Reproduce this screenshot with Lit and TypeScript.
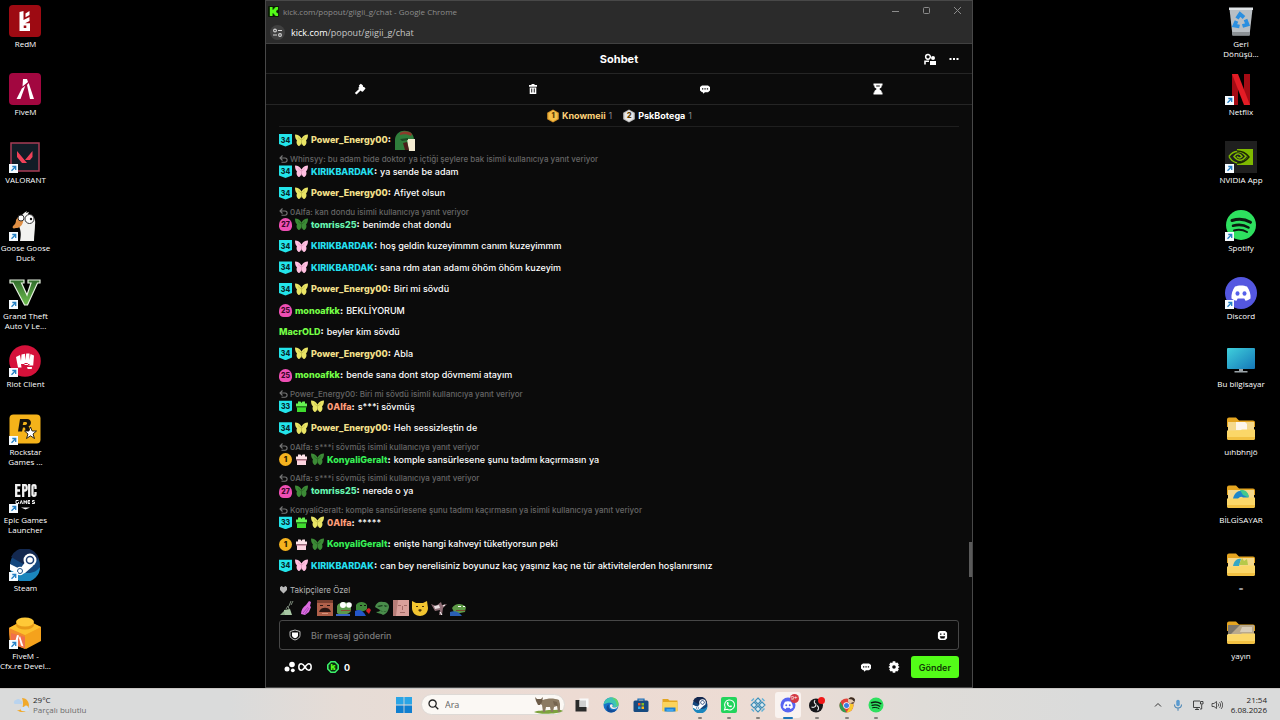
import { LitElement, html, css, svg, nothing, TemplateResult } from "lit";
import { customElement } from "lit/decorators.js";

type Art = ReturnType<typeof svg>;

const draw = (size: number, box: string, body: Art, cls = "") => html`<svg
  class=${cls}
  width=${size}
  height=${size}
  viewBox=${box}
  aria-hidden="true"
>${body}</svg>`;

/* ---------- shared logos ---------- */

const steamBody = svg`
  <circle cx="16" cy="16" r="15" fill="#14477e"/>
  <path d="M1 18a15 15 0 0 0 30 0c-5 7-14 9-30 0z" fill="#1b86bd"/>
  <path d="M2 8a15 15 0 0 1 28 2L16 16z" fill="#13284f"/>
  <path d="M1 15l10 5 6-8 7 5-8 7-5 2-10-5z" fill="#fff"/>
  <circle cx="21" cy="11" r="6.500" fill="#fff"/>
  <circle cx="21" cy="11" r="4.300" fill="#1d3f74"/>
  <circle cx="21" cy="11" r="2.800" fill="#fff"/>
  <circle cx="11" cy="22" r="4.200" fill="#fff"/>
  <circle cx="11" cy="22" r="2.500" fill="none" stroke="#1d4f86" stroke-width="1"/>`;

const discordGlyph = svg`
  <path d="M10 9.500c3-1.500 9-1.500 12 0 2.500 3.500 4 8 3.500 12-1.500 1.300-3.200 2-5 2.300l-1.200-2.200h-6.600l-1.200 2.200c-1.800-.3-3.500-1-5-2.300C6 17.500 7.500 13 10 9.500z" fill="#fff"/>
  <ellipse cx="12.500" cy="16.500" rx="2" ry="2.200" fill="#5561ea"/>
  <ellipse cx="19.500" cy="16.500" rx="2" ry="2.200" fill="#5561ea"/>`;

const spotifyBody = svg`
  <circle cx="16" cy="16" r="15" fill="#2ee05f"/>
  <g fill="none" stroke="#0b1a10" stroke-linecap="round">
    <path d="M7 11.500c6-2 13-1.500 18.500 1.800" stroke-width="3"/>
    <path d="M8 16.800c5.500-1.600 11-1 15.500 1.700" stroke-width="2.500"/>
    <path d="M9 21.500c4.500-1.200 9-.8 13 1.500" stroke-width="2"/>
  </g>`;

const folderBody = (inside: Art) => svg`
  <path d="M2 6.500a2 2 0 0 1 2-2h7l3 3h14a2 2 0 0 1 2 2V14H2z" fill="#e5a520"/>
  <path d="M3 9h26v10H3z" fill="#f5d98c"/>
  ${inside}
  <path d="M2 17.500h13l2-1h13V25a2 2 0 0 1-2 2H4a2 2 0 0 1-2-2z" fill="#fbd768"/>
  <path d="M2 24h28v1a2 2 0 0 1-2 2H4a2 2 0 0 1-2-2z" fill="#f2c142"/>`;

const shortcut = svg`
  <rect x="0" y="23" width="9" height="9" fill="#f6fbff"/>
  <path d="M2.500 29.800L6 26.300M3.300 25.500h3.400v3.400" fill="none" stroke="#2480c4" stroke-width="1.300"/>`;

/* ---------- desktop shortcuts ---------- */

interface Shortcut {
  label: string;
  art: Art;
  link?: boolean;
}

const leftIcons: Shortcut[] = [
  {
    label: "RedM",
    art: svg`<rect width="32" height="32" rx="4" fill="#9d0a12"/>
      <path d="M10.500 7l4-1v9l6-3v4l-4.500 2.200H21V26H10.500zm4.200 13.500v2.500h2.600v-2.500z" fill="#fff" fill-rule="evenodd"/>
      <path d="M16.500 8.500l4-2.500v4l-4 2.200z" fill="#fff"/>`,
  },
  {
    label: "FiveM",
    art: svg`<rect width="32" height="32" rx="4" fill="#a20740"/>
      <path d="M14 6h4l1 3-5.500 4.500zM12.800 15.500l3.500-2.800L11.500 26H7.500zM18 12l1.700-2L25 26h-4z" fill="#fff"/>`,
  },
  {
    label: "VALORANT",
    link: true,
    art: svg`<rect x="2" y="2" width="28" height="28" fill="#111c26" stroke="#a73d55" stroke-width="1.500"/>
      <path d="M8 10l10 12h-5l-5-6zM23.500 10v6l-2.500 3h-5z" fill="#ef4158"/>`,
  },
  {
    label: "Goose Goose\nDuck",
    link: true,
    art: svg`<path d="M11 32c1-6 1-8 0-12-2-5-1-12 4-16l3-2-1 2 3-1-1 2c6 1 8 6 7 11 0 5-1 10-1 16z" fill="#f2f2f0"/>
      <path d="M9 8c3-2 6 0 5 5-1 4-4 6-7 6-3 1-4 0-3-2 2-2 3-3 3-6z" fill="#df8f45"/>
      <circle cx="12" cy="9" r="3" fill="#fff" stroke="#333"/><circle cx="20.500" cy="10" r="4.500" fill="#fff" stroke="#333"/>
      <circle cx="22" cy="10" r="1.200" fill="#111"/>`,
  },
  {
    label: "Grand Theft\nAuto V Le...",
    link: true,
    art: svg`<defs><linearGradient id="gta" x1="0" x2="0" y1="0" y2="1"><stop offset="0" stop-color="#2f6b2b"/><stop offset="1" stop-color="#6fbf4f"/></linearGradient></defs>
      <path d="M1 3h14v3h-2.500L18 18l4-12h-3V3h12v3h-2.500L18.500 28h-3L4 6H1z" fill="url(#gta)" stroke="#e6f0e0" stroke-width="1.200"/>`,
  },
  {
    label: "Riot Client",
    link: true,
    art: svg`<circle cx="16" cy="16" r="15.800" fill="#d5113a"/>
      <path d="M7 12l4-2 1 6 .5-6.500 3.500-.8.5 6.500.7-6.800 3.300.2v6.500l1-6 3.500 1.500-.8 10h-4.700l-1-2.600h-3V20h5v-1H12l.5 3.500H9z" fill="#fff"/>
      <path d="M18 22h5l-.3 2h-4z" fill="#fff"/>`,
  },
  {
    label: "Rockstar\nGames ...",
    link: true,
    art: svg`<rect x=".5" y="1.500" width="31" height="29" rx="4" fill="#f5b31a"/>
      <path d="M11 6h7c5 0 5 6 1.500 7.500 1.500 1 .5 3 1 5h-4c-.5-1.500.5-4-1.500-4h-1l-1 4H9zm3.500 3l-.8 3h2.500c2.300 0 2.500-3 .6-3z" fill="#17120a" fill-rule="evenodd"/>
      <path d="M21.500 14l1.600 4h4.400L24 21l1.500 4.500-4-2.700-4 2.700L19 21l-3.500-3h4.400z" fill="#fff" stroke="#17120a" stroke-width=".9"/>`,
  },
  {
    label: "Epic Games\nLauncher",
    link: true,
    art: svg`<g fill="none" stroke="#f1f1f1" stroke-width="2.300">
        <path d="M11.500 4.200H7.200v10.600h4.300M7 9.500h4M14.200 16V4.200h2c2 0 2 5.300 0 5.300h-2M20.200 3v13M26.500 8V5.500q0-1.300-1.500-1.300T23.500 5.500v8q0 1.300 1.500 1.300t1.500-1.300V11"/>
      </g>
      <g fill="none" stroke="#f1f1f1" stroke-width="1">
        <path d="M9.500 19.500H7v3h2.500v-1.500M11 23l1.300-3.500L13.500 23M15 23v-3.500l1.200 2 1.200-2V23M21 19.500h-2v3h2M19 21h2M25.500 19.500h-2V21h2v1.500h-2.500"/>
      </g>
      <path d="M12 26.500h9l-4.500 2z" fill="#f1f1f1"/>`,
  },
  { label: "Steam", link: true, art: steamBody },
  {
    label: "FiveM -\nCfx.re Devel...",
    link: true,
    art: svg`<path d="M0 11L16 2l16 8v14L17 32 1 26z" fill="#f5a21c"/>
      <path d="M0 11l16 7v14L1 26z" fill="#f28a2b"/><path d="M0 11L16 3l16 7-16 8z" fill="#fcc02c"/>
      <ellipse cx="16" cy="8" rx="9" ry="4.500" fill="#e89b18"/><ellipse cx="16" cy="5" rx="9" ry="4.500" fill="#ffc937"/>
      <path d="M2 16l14 4v11L2 27z" fill="#f0704a"/>
      <path d="M8 18l2 .5-2.500 9-2-.7zM11 19l3.500 10.500-2.500-1L10 21z" fill="#fff"/>`,
  },
];

const rightIcons: Shortcut[] = [
  {
    label: "Geri\nDönüşü...",
    art: svg`<path d="M4.500 4h23l-3 26.500h-17z" fill="#b9bfc4"/><path d="M4 2.500h24v2.500H4z" fill="#dfe3e6"/>
      <path d="M7 27h18l-.4 3.500H7.500z" fill="#8b9094"/>
      <g fill="none" stroke="#2b8fe0" stroke-width="3.800"><path d="M12 13.500l3-4.500 4 3.500M20.500 14.500l2 5-5 1.500M14.500 21.500l-5-1 2-4.500"/></g>`,
  },
  {
    label: "Netflix",
    link: true,
    art: svg`<path d="M7 1h6v31H7z" fill="#a50b14"/><path d="M19 1h6v31h-6z" fill="#a50b14"/><path d="M7 1h6l12 31h-6z" fill="#e31c25"/>`,
  },
  {
    label: "NVIDIA App",
    link: true,
    art: svg`<rect width="32" height="32" fill="#1f1f1f"/><path d="M12 8h16v16H12z" fill="#7fb900"/>
      <path d="M4 16c4-6 12-7 19 0-6 7-15 7-19 0z" fill="#1f1f1f"/>
      <g fill="none" stroke="#7fb900" stroke-width="1.500"><path d="M4 15.500c5-7 13-6 17 0-4 5-8 5-12 0 3-4 6-3 8 0-2 2-3 2-5 0"/><path d="M4 15.500c3 6 10 9 18 4"/></g>
      <path d="M12 10c6 0 9 2 12 6-3 4-7 6-12 6" fill="none" stroke="#1b2600" stroke-width="1.400"/>`,
  },
  { label: "Spotify", link: true, art: spotifyBody },
  { label: "Discord", link: true, art: svg`<circle cx="16" cy="16" r="16" fill="#5457e0"/>${discordGlyph}` },
  {
    label: "Bu bilgisayar",
    art: svg`<defs><linearGradient id="pc" x1="0" x2="1" y1="0" y2="1"><stop offset="0" stop-color="#3fd0dc"/><stop offset="1" stop-color="#1577b8"/></linearGradient></defs>
      <rect x="2" y="3" width="28" height="21" rx="1" fill="url(#pc)"/><path d="M14 24h4v2h4.500v1.500H9.500V26H14z" fill="#9aa3a8"/>`,
  },
  { label: "uıhbhnjö", art: folderBody(svg`<path d="M11 9h9l2 2v6H11z" fill="#fdf6ea"/>`) },
  {
    label: "BİLGİSAYAR",
    art: folderBody(svg`<path d="M8 18c1-7 8-11 14-6 2 2 2 4 1 6h-5c0-3-3-3-5 0z" fill="#1d86c9"/><path d="M15 9c5-1 9 3 8.500 7.500L18 14z" fill="#43c98c"/>`),
  },
  {
    label: "=",
    art: folderBody(svg`<path d="M8 17c1-5 4-8 8-7l-2 7z" fill="#35a7c4"/><path d="M14 16l3-7 2 3 3-2 1 6z" fill="#b7c94a"/>`),
  },
  {
    label: "yayın",
    art: folderBody(svg`<path d="M3 8h26v9H3z" fill="#b9a98c"/><path d="M3 8h12l-9 9H3z" fill="#7d776c"/><path d="M17 10h10v5H15z" fill="#d8cdb8"/>`),
  },
];

/* ---------- chat badges ---------- */

const levelBadge = (n: string) => html`<span class="badge shield">${n}</span>`;
const blobBadge = (n: string) => html`<span class="badge blob">${n}</span>`;
const coinBadge = () => html`<span class="badge coin">1</span>`;

const butterfly = (color: string, dark: string) =>
  draw(
    13,
    "0 0 26 26",
    svg`<path d="M0 1c6 0 10 3 13 8 3-5 7-8 13-8 0 5-1 9-4 12 2 3 1 8-3 11-4 0-5-4-6-7-1 3-2 7-6 7-4-3-5-8-3-11C1 10 0 6 0 1z" fill=${color}/>
      <path d="M13 8v13M12 12L6 7M14 12l6-5" stroke=${dark} stroke-width="1.200" fill="none"/>`,
    "mark"
  );
const yellowFly = () => butterfly("#e9e465", "#b4b043");
const pinkFly = () => butterfly("#ffbfe0", "#d892b6");
const greenFly = () => butterfly("#3c8a36", "#235a20");

const gift = (box: string, lid: string, seam: string) =>
  draw(
    13,
    "0 0 26 26",
    svg`<path d="M6 3h5l2 3 2-3h5v4h4v6H2V7h4z" fill=${lid}/><path d="M4 14h18v10H4z" fill=${box}/><path d="M2 13h22v2H2z" fill=${seam}/>`,
    "mark"
  );
const greenGift = () => gift("#3fdc2e", "#66f352", "#1c7a16");
const pinkGift = () => gift("#fbd3de", "#fde2e8", "#b0657e");

interface Line {
  who: string;
  tone: string;
  marks: TemplateResult[];
  text: string | TemplateResult;
  reply?: string;
}

const pepeDrink = draw(
  21,
  "0 0 21 21",
  svg`<path d="M1 20V9c1-6 6-9 11-8 5 0 8 4 8 9v10z" fill="#2f7d3b"/><path d="M6 3c4-2 9-2 12 1l-1 2c-4-2-7-2-11-1z" fill="#8c3a2b"/>
    <path d="M13 9h8v12h-6z" fill="#f4ecd2"/><path d="M9 13l4-1 2 8h-4z" fill="#4b1d1b"/><path d="M6 9l8-1v2l-6 1z" fill="#1b4a23"/>`,
  "emote"
);

const power = (text: string | TemplateResult): Line => ({
  who: "Power_Energy00",
  tone: "sand",
  marks: [levelBadge("34"), yellowFly()],
  text,
});
const kirik = (text: string, reply?: string): Line => ({
  who: "KIRIKBARDAK",
  tone: "cyan",
  marks: [levelBadge("34"), pinkFly()],
  text,
  reply,
});
const tomris = (text: string, reply: string): Line => ({
  who: "tomriss25",
  tone: "mint",
  marks: [blobBadge("27"), greenFly()],
  text,
  reply,
});
const mono = (text: string): Line => ({ who: "monoafkk", tone: "lime", marks: [blobBadge("25")], text });
const alfa = (text: string, reply: string): Line => ({
  who: "0Alfa",
  tone: "coral",
  marks: [levelBadge("33"), greenGift(), yellowFly()],
  text,
  reply,
});
const konyali = (text: string, reply?: string): Line => ({
  who: "KonyaliGeralt",
  tone: "green",
  marks: [coinBadge(), pinkGift(), greenFly()],
  text,
  reply,
});

const lines: Line[] = [
  power(pepeDrink),
  kirik("ya sende be adam", "Whinsyy: bu adam bide doktor ya içtiği şeylere bak isimli kullanıcıya yanıt veriyor"),
  power("Afiyet olsun"),
  tomris("benimde chat dondu", "0Alfa: kan dondu isimli kullanıcıya yanıt veriyor"),
  kirik("hoş geldin kuzeyimmm canım kuzeyimmm"),
  kirik("sana rdm atan adamı öhöm öhöm kuzeyim"),
  power("Biri mi sövdü"),
  mono("BEKLİYORUM"),
  { who: "MacrOLD", tone: "lime", marks: [], text: "beyler kim sövdü" },
  power("Abla"),
  mono("bende sana dont stop dövmemi atayım"),
  alfa("s***i sövmüş", "Power_Energy00: Biri mi sövdü isimli kullanıcıya yanıt veriyor"),
  power("Heh sessizleştin de"),
  konyali("komple sansürlesene şunu tadımı kaçırmasın ya", "0Alfa: s***i sövmüş isimli kullanıcıya yanıt veriyor"),
  tomris("nerede o ya", "0Alfa: s***i sövmüş isimli kullanıcıya yanıt veriyor"),
  alfa("*****", "KonyaliGeralt: komple sansürlesene şunu tadımı kaçırmasın ya isimli kullanıcıya yanıt veriyor"),
  konyali("enişte hangi kahveyi tüketiyorsun peki"),
  kirik("can bey nerelisiniz boyunuz kaç yaşınız kaç ne tür aktivitelerden hoşlanırsınız"),
];

/* ---------- quick emotes ---------- */

const quickEmotes: [string, Art][] = [
  ["Kutu", svg`<path d="M5 10l6-1 2 6H5z" fill="#a9c9a4"/><path d="M1 15l4-4 1 4z" fill="#8fb08a"/><path d="M7 9l2-3 1 3M10 6l2-5M12 5l2-4" fill="none" stroke="#7e8b7c"/>`],
  ["Eller", svg`<path d="M3 14c0-4 2-7 5-9l3-4 2 1-1 4 1 1-2 5-4 3z" fill="#dc6be0"/><path d="M5 13l5-6M7 14l4-6" stroke="#a84cb8"/>`],
  ["Bıyık", svg`<path d="M0 0h16v16H0z" fill="#b0604a"/><path d="M0 0h16v3H0z" fill="#7a3f2f"/><path d="M3 10c2-3 8-3 10 0l1 2H2z" fill="#2a1512"/><path d="M3 5h3v1H3zM10 5h3v1h-3z" fill="#2a1512"/><path d="M5 13h6v1H5z" fill="#d8957c"/>`],
  ["Pepe", svg`<path d="M1 6c2-5 12-5 14 0v5c-2 4-11 5-14 2z" fill="#5c9a4b"/><circle cx="7" cy="5" r="3" fill="#fff"/><circle cx="13" cy="5" r="2.800" fill="#fff"/><path d="M5 10h10v1H5z" fill="#8c4a38"/><path d="M0 14h14v2H0z" fill="#3b66c4"/>`],
  ["Gül", svg`<path d="M1 5c2-4 9-4 11 0v4c-2 3-8 3-11 1z" fill="#3f8a3a"/><path d="M0 11c4-2 8-1 11 5H0z" fill="#2456c9"/><path d="M12 9l2-1 2 2-2 4-3-3z" fill="#d3202c"/><path d="M5 5h2v1H5zM9 5h2v1H9z" fill="#111"/>`],
  ["Gülen", svg`<path d="M1 7c1-4 4-6 8-5 4 0 6 2 6 5-1 5-3 7-6 8-2-2-5-1-7-3 3 0 4-1 4-2z" fill="#4a8d4b"/><path d="M3 6l5-1 1 1-4 1zM10 5l4 1-3 1zM5 10c3 2 6 2 9 0l-3 2z" fill="#173c1c"/>`],
  ["Yüz", svg`<path d="M0 0h16v16H0z" fill="#d9a09b"/><path d="M0 0h5l-2 16H0z" fill="#b77d78"/><path d="M5 5h3v1H5zM11 5h3v1h-3zM7 12h5v1H7zM9 6h1v4H9z" fill="#a46b67"/>`],
  ["Kedi", svg`<path d="M0 1l4 2h7l4-2 1 7c0 5-4 8-8 8s-8-3-8-8z" fill="#f2c530"/><path d="M4 6h2v1H4zM10 6h2v1h-2zM6 10l2-1 2 1-2 2z" fill="#4d3508"/>`],
  ["Köpek", svg`<path d="M0 4l5 2 5-4 1 3 5-1-4 4-1 7H8l1-5-5 1z" fill="#8d6d75"/><path d="M3 6l5-1 1 3-5 1z" fill="#eadfe2"/><path d="M12 6l2-1M9 12l2 3" stroke="#fff"/>`],
  ["Yatan", svg`<path d="M2 8c3-5 10-5 14-1l-1 5-10 2z" fill="#5d9a47"/><path d="M0 12c5-2 9 0 12 4H0z" fill="#2a5fb5"/><path d="M8 6h3v1H8zM13 6h2v1h-2z" fill="#fff"/><path d="M6 10h9v1H6z" fill="#7c4730"/>`],
];

/* ---------- interface glyphs ---------- */

const glyph = {
  kick: svg`<rect width="12" height="12" rx="1" fill="#0c1a08"/><path d="M2 1h3v3h1V3h1V2h1V1h3v3h-1v1H9v2h1v1h1v3H8v-1H7V9H6V8H5v3H2z" fill="#53fc18"/>`,
  tune: svg`<g fill="none" stroke="#d5d5d5" stroke-width="1.100"><circle cx="3" cy="3.500" r="1.400"/><path d="M6 3.500h4M1 8h4"/><circle cx="8" cy="8" r="1.400"/></g>`,
  min: svg`<path d="M2 6.500h7" stroke="#8c8c8c"/>`,
  max: svg`<rect x="2.500" y="2.500" width="6" height="6" rx="1" fill="none" stroke="#8c8c8c"/>`,
  close: svg`<path d="M2 2l7 7M9 2L2 9" stroke="#8c8c8c"/>`,
  users: svg`<path d="M4 1.500A2.300 2.300 0 1 1 4 6.200 2.300 2.300 0 0 1 4 1.500z" fill="none" stroke="#fff" stroke-width="1.500"/><path d="M1 11.500V8.300h4" fill="none" stroke="#fff" stroke-width="1.600"/><circle cx="9" cy="5" r="2" fill="#fff"/><path d="M6 8h6v4H6z" fill="#fff"/>`,
  dots: svg`<path d="M1.500 5h2v2h-2zM5 5h2v2H5zM8.500 5h2v2h-2z" fill="#fff"/>`,
  hammer: svg`<path d="M4.800 2.500L6.800.8l2 1.500.3 1.400 1.400.6 1 1.200-2.700 3.200L7.200 8.300l-.6-.7-4.100 4L.8 10.100 5 5.900l-.8-1 1.200-1.300z" fill="#fff"/>`,
  trash: svg`<path d="M4.500 1h3v1H10v1.800H2V2h2.500zM2.700 4.500h6.600V11H2.700zM4.300 5.500v4h.9v-4zm2.500 0v4h.9v-4z" fill="#fff" fill-rule="evenodd"/>`,
  bubble: svg`<path d="M3 2.500h6L11 4v3.500L9 9.200H6L4 10.700V9.200H3L1 7.500V4z" fill="#fff"/><path d="M3 5.300h1.300v1.300H3zM5.400 5.300h1.300v1.300H5.400zM7.800 5.300h1.300v1.300H7.800z" fill="#0b0b0b"/>`,
  hourglass: svg`<path d="M1.500.5h9v1.900h-.9v1.800L7.300 6l2.300 2v1.600h.9v1.900h-9V9.600h.9V8l2.300-2-2.300-1.800V2.400h-.9zM4.200 2.500v1h3.600v-1z" fill="#fff" fill-rule="evenodd"/>`,
  reply: svg`<path d="M3.500 1.500L1 4l2.500 2.500M1.300 4H6a1.600 1.600 0 0 1 0 4.200H2.500" fill="none" stroke="#777" stroke-width="1.100"/>`,
  heart: svg`<path d="M4.500 8.500L1 5V2.300L2.500 1l2 1.200 2-1.200L8 2.300V5z" fill="#b9b9b9"/>`,
  shield: svg`<path d="M1 2.500L6 1l5 1.500v4c0 2-2 3.500-5 4.500-3-1-5-2.500-5-4.500z" fill="none" stroke="#bdbdbd" stroke-width="1"/><path d="M3 3.500h6v3c0 1.200-1 2-3 2.800-2-.8-3-1.600-3-2.800z" fill="#fff"/>`,
  smile: svg`<path d="M3 1h6l2 2v6l-2 2H3L1 9V3z" fill="#fff"/><path d="M3.300 3.700h1.500v1.500H3.300zM7.200 3.700h1.500v1.500H7.200zM3 6.800h6L8 9.200H4z" fill="#0b0b0b"/>`,
  orbs: svg`<circle cx="8" cy="3.500" r="2.800" fill="#fff"/><circle cx="3" cy="8" r="2.500" fill="#fff"/><circle cx="8.800" cy="9.300" r="1.900" fill="#fff"/>`,
  infinity: svg`<path d="M7 6C5.500 3.500 4.500 2.800 3.300 2.800 0 2.800 0 9.200 3.300 9.200 6 9.200 8 2.800 10.700 2.800c3.300 0 3.300 6.400 0 6.400C9.500 9.200 8.500 8.500 7 6z" fill="none" stroke="#fff" stroke-width="1.500"/>`,
  kickCoin: svg`<path d="M4 .8h4L11.200 4v4L8 11.200H4L.8 8V4z" fill="#0b2a10" stroke="#3cf06a" stroke-width="1.600"/><path d="M3.800 3h1.700v1.700h.8V4H8.300v1.500H7.200v1h1.100V9H6.300V7.300h-.8V9H3.800z" fill="#53fc18"/>`,
  gear: svg`<path d="M4.800.3h2.400l.5 1.700 1.700-.5 1.400 1.900-.8 1.400L11.600 6 10 7.200l.8 1.400-1.400 1.900-1.700-.5-.5 1.700H4.800L4.300 10l-1.700.5-1.400-1.900L2 7.200.4 6 2 4.800l-.8-1.400 1.400-1.900 1.700.5zM6 4.200a1.800 1.800 0 1 0 0 3.600 1.800 1.800 0 0 0 0-3.600z" fill="#fff" fill-rule="evenodd"/>`,
};

const rankHex = (n: string, top: string, low: string) => html`<span class="rank">
  ${draw(14, "0 0 14 14", svg`<path d="M7 .5l5.800 3.300v6.400L7 13.500 1.200 10.200V3.800z" fill=${low}/><path d="M7 1.500l4.500 2.700v5.600L7 12.300 2.500 9.800V4.200z" fill=${top}/>`)}
  <b>${n}</b>
</span>`;

/* ---------- taskbar ---------- */

const taskArt: { name: string; art: Art; state?: string }[] = [
  { name: "Görev Görünümü", art: svg`<path d="M11 3h18v18H11z" fill="#f8f8f8"/><path d="M3 6h8v14h14v9H3z" fill="#2a2a2a"/><path d="M11 7h13v13H11z" fill="#cfcfcf"/>` },
  {
    name: "Edge",
    art: svg`<circle cx="16" cy="16" r="15" fill="#1673c8"/><path d="M1 15C3 6 9 1 17 1c9 0 14 6 14 13 0 4-3 7-8 7-4 0-4-3-2-5 0-5-10-7-20-1z" fill="#3fc6b4"/>
      <path d="M17 1c9 0 14 6 14 13 0 3-2 5-4 6 2-9-3-15-10-19z" fill="#67d466"/><path d="M12 15c-3 6 2 14 15 11-4 5-11 6-16 4-5-3-6-13 1-15z" fill="#114a96"/><path d="M14 16c1-2 4-2 6 0-2 2-2 5 2 5 3 0 6-1 8-3-1 4-4 6-8 6-5 0-9-3-8-8z" fill="#f3ece6"/>`,
  },
  {
    name: "Microsoft Store",
    art: svg`<path d="M10 8V4h12v4" fill="none" stroke="#1b6fb8" stroke-width="2.500"/><rect x="1" y="7" width="30" height="23" rx="3" fill="#174a80"/>
      <path d="M10 12h5v5h-5z" fill="#f0532d"/><path d="M17 12h5v5h-5z" fill="#84bc23"/><path d="M10 19h5v5h-5z" fill="#29a8ea"/><path d="M17 19h5v5h-5z" fill="#fcb714"/>`,
  },
  { name: "Dosya Gezgini", art: svg`<path d="M1 4h11l3 3h16v21H1z" fill="#e3a51f"/><path d="M1 10h30v19H1z" fill="#fbd35c"/><path d="M5 21h22v8H5z" fill="#1f7fd2"/><path d="M9 24h14v5H9z" fill="#3da5ee"/>` },
  { name: "Steam", art: steamBody, state: "open" },
  {
    name: "WhatsApp",
    state: "open",
    art: svg`<rect width="32" height="32" rx="4" fill="#22d45c"/><path d="M7 26l1.500-5A10 10 0 1 1 12 24.500z" fill="none" stroke="#fff" stroke-width="2.200"/><path d="M12 11c2-2 3 0 3.500 2l-1 1.500c1 2 2 2.700 3.500 3.500l1.500-1.500c2 .5 3.500 1.500 1.500 3.500-4 2-11-4-9-9z" fill="#fff"/>`,
  },
  {
    name: "Araçlar",
    state: "open",
    art: svg`<g fill="#dceaf0" stroke="#3f8fb8" stroke-width="2.200"><path d="M16 2l6 6-6 6-6-6zM8 10l6 6-6 6-6-6zM24 10l6 6-6 6-6-6zM16 18l6 6-6 6-6-6z"/></g><path d="M3 8l5-5M23 29l6-6M24 3l5 5M3 24l5 5" stroke="#5fb0d6" stroke-width="2.800"/>`,
  },
  {
    name: "Discord",
    state: "active",
    art: svg`<circle cx="16" cy="16" r="15" fill="#5865f2"/>${discordGlyph}`,
  },
  {
    name: "OBS",
    state: "open",
    art: svg`<circle cx="14" cy="17" r="14" fill="#16161a"/><g fill="none" stroke="#e6e6e6" stroke-width="2.200"><path d="M12 6c-3 4-1 8 3 9M5 20c4 2 8 0 9-4M17 27c3-3 3-7-1-10"/></g><circle cx="25" cy="7" r="7" fill="#f01818"/>`,
  },
  {
    name: "Chrome",
    state: "open",
    art: svg`<circle cx="15" cy="17" r="14" fill="#e2423a"/><path d="M3 10l7 12 5 9C6 31 1 24 1 17c0-3 1-5 2-7z" fill="#2e9e4f"/><path d="M15 31l7-12V11h6c3 10-3 20-13 20z" fill="#f8c92c"/>
      <circle cx="15" cy="17" r="6.500" fill="#fff"/><circle cx="15" cy="17" r="5" fill="#3c7de0"/><circle cx="25" cy="7" r="7" fill="#e2c9ae"/><path d="M19 4c3-5 10-4 13 1l-1 5-5-5z" fill="#3a2a22"/><path d="M22 13l6-3 3 1-3 3z" fill="#6a4c3c"/>`,
  },
  { name: "Spotify", art: spotifyBody, state: "open" },
];

const cow = html`<svg class="cow" width="30" height="18" viewBox="0 0 30 18" aria-hidden="true">
  <path d="M0 16c4-2 8-1 15-2 6 0 12-1 14 1-4 3-24 4-29 1z" fill="#7da23d" />
  <path d="M4 3l5 1c5-2 11-2 16 0l1 4v8h-2l-1-6-3 1-1 5h-2l-1-5h-4l-1 5H9l-1-7-3-2-2-4z" fill="#8b7a62" />
  <path d="M1 1l2 2h4l2-2-1 5-2 3H4L2 5z" fill="#6d5c48" /><path d="M19 5l4 1 1 4-4-1z" fill="#75644e" />
</svg>`;

@customElement("app-root")
export class AppRoot extends LitElement {
  static styles = css`
    :host {
      display: flex;
      flex-direction: column;
      height: 100vh;
      overflow: hidden;
      background: #000;
      color: #fff;
      font-family: "Open Sans", "Noto Sans", sans-serif;
    }
    * {
      box-sizing: border-box;
    }
    svg {
      display: block;
      flex: none;
    }
    button,
    input {
      font: inherit;
      color: inherit;
      background: none;
      border: 0;
      padding: 0;
      margin: 0;
      outline: none;
    }

    .desktop {
      position: relative;
      flex: 1;
      min-height: 0;
      display: flex;
      justify-content: space-between;
      padding-right: 14px;
    }
    .icons {
      display: grid;
      grid-auto-rows: 68px;
      align-content: start;
      width: 50px;
    }
    .shortcut {
      display: flex;
      flex-direction: column;
      align-items: center;
      gap: 2px;
      padding-top: 5px;
      font-size: 8px;
      line-height: 10px;
      text-align: center;
    }
    .shortcut span {
      white-space: pre;
    }

    .window {
      position: absolute;
      top: 0;
      bottom: 0;
      left: 265px;
      right: 307px;
      display: flex;
      flex-direction: column;
      background: #0b0b0b;
      border: 1px solid #484848;
      font-family: Inter, sans-serif;
    }
    .chrome {
      background: #2b2b2b;
      border-bottom: 1px solid #414141;
      font-family: "Open Sans", "Noto Sans", sans-serif;
    }
    .titlebar {
      display: flex;
      align-items: center;
      height: 20px;
      padding: 0 8px 0 2px;
      gap: 4px;
      font-size: 8px;
      color: #8d8d8d;
    }
    .titlebar .caption {
      flex: 1;
    }
    .controls {
      display: flex;
      gap: 19px;
    }
    .address {
      display: flex;
      align-items: center;
      height: 22px;
      padding: 0 4px;
      gap: 6px;
      font-size: 9px;
      color: #c6c6c6;
    }
    .address b {
      font-weight: 400;
      color: #fff;
    }
    .tune {
      display: grid;
      place-items: center;
      width: 15px;
      height: 15px;
      border-radius: 50%;
      background: #404040;
    }

    .head {
      display: grid;
      grid-template-columns: 1fr auto 1fr;
      align-items: center;
      height: 30px;
      padding: 0 12px;
      border-bottom: 1px solid #252525;
    }
    .head h1 {
      grid-column: 2;
      margin: 0;
      font-size: 11px;
      font-weight: 700;
    }
    .head .actions {
      display: flex;
      justify-content: flex-end;
      gap: 12px;
    }
    .mod {
      display: grid;
      grid-template-columns: repeat(4, 1fr);
      height: 31px;
      padding: 0 8px;
      border-bottom: 1px solid #252525;
    }
    .mod button {
      display: grid;
      place-items: center;
    }
    .leaders {
      display: flex;
      justify-content: center;
      align-items: center;
      gap: 10px;
      height: 22px;
      margin: 0 13px;
      border-bottom: 1px solid #1f1f1f;
      font-size: 9px;
      font-weight: 700;
    }
    .leader {
      display: flex;
      align-items: center;
      gap: 2px;
    }
    .leader i {
      font-style: normal;
      font-weight: 400;
      color: #8a8a8a;
      margin-left: 1px;
    }
    .rank {
      display: grid;
      place-items: center;
    }
    .rank > * {
      grid-area: 1 / 1;
    }
    .rank b {
      font-size: 7px;
      line-height: 14px;
      color: #5c3d06;
    }
    .gold {
      color: #ffd27a;
    }

    .feed {
      position: relative;
      flex: 1;
      min-height: 0;
      display: flex;
      flex-direction: column;
      justify-content: space-between;
      margin: 0;
      padding: 5px 13px 6px;
      list-style: none;
      overflow: hidden;
      font-size: 9px;
      line-height: 16px;
    }
    .thumb {
      position: absolute;
      right: 0;
      bottom: 3px;
      width: 3px;
      height: 35px;
      background: #5a5a5a;
    }
    .reply {
      display: flex;
      align-items: center;
      gap: 1px;
      height: 10px;
      font-size: 8px;
      font-weight: 500;
      line-height: 10px;
      color: #666;
      white-space: nowrap;
    }
    .msg {
      display: flex;
      align-items: center;
      height: 16px;
      gap: 3px;
      font-weight: 500;
      white-space: nowrap;
    }
    .msg b {
      font-weight: 800;
    }
    .badge {
      display: grid;
      place-items: center;
      width: 13px;
      height: 13px;
      font-size: 7px;
      font-weight: 800;
      line-height: 11px;
      color: #07262a;
    }
    .shield {
      background: #23e4ea;
      clip-path: polygon(0 4%, 100% 4%, 100% 80%, 50% 100%, 0 80%);
    }
    .blob {
      background: #ee4fb4;
      border-radius: 50% 50% 36% 36%;
      color: #3a0627;
    }
    .coin {
      background: #f5b31f;
      border-radius: 50%;
      color: #2b1c00;
      font-size: 8px;
    }
    .emote {
      margin: -3px 0;
    }
    .sand { color: #f3e08a; }
    .cyan { color: #25e0f0; }
    .mint { color: #67f5b0; }
    .lime { color: #75fd46; }
    .coral { color: #ff9d78; }
    .green { color: #37ee55; }

    .composer {
      padding: 3px 13px 9px;
    }
    .only {
      display: flex;
      align-items: center;
      gap: 2px;
      height: 13px;
      font-size: 8px;
      color: #b5b5b5;
    }
    .quick {
      display: flex;
      gap: 3px;
      margin: 4px 0;
    }
    .field {
      display: flex;
      align-items: center;
      gap: 10px;
      height: 30px;
      padding: 0 10px 0 9px;
      border: 1px solid #474747;
      border-radius: 3px;
    }
    .field input {
      flex: 1;
      min-width: 0;
      font-size: 9px;
      font-weight: 500;
    }
    .field input::placeholder {
      color: #7c7c7c;
      opacity: 1;
    }
    .foot {
      display: flex;
      align-items: center;
      margin-top: 6px;
      padding-left: 5px;
      font-size: 9px;
      font-weight: 700;
    }
    .pair {
      display: flex;
      align-items: center;
      gap: 2px;
    }
    .balance {
      display: flex;
      align-items: center;
      gap: 5px;
      margin-left: 15px;
    }
    .send-group {
      display: flex;
      align-items: center;
      gap: 16px;
      margin-left: auto;
    }
    .send {
      height: 22px;
      margin-left: -5px;
      padding: 0 8px;
      border-radius: 3px;
      background: #53fc18;
      color: #123a06;
      font-weight: 600;
    }

    .taskbar {
      position: relative;
      display: grid;
      grid-template-columns: 1fr auto 1fr;
      align-items: center;
      height: 32px;
      padding: 0 13px;
      border-top: 1px solid #c9c6c4;
      background: linear-gradient(90deg, #dadbdb 0 18%, #e6dcd6 27%, #eddbd3 45%, #ecdcd4 60%, #dfdcd8 72%, #dadbdb 85%);
      color: #1d1d1d;
      font-size: 8px;
      line-height: 10px;
    }
    .weather {
      display: flex;
      align-items: center;
      justify-self: start;
      gap: 4px;
      text-align: left;
    }
    .weather span {
      display: block;
    }
    .weather .sky {
      color: #6b6b6b;
    }
    .center {
      display: flex;
      align-items: center;
      padding-left: 7px;
    }
    .start {
      margin-right: 9px;
    }
    .search {
      display: flex;
      align-items: center;
      gap: 6px;
      width: 144px;
      height: 21px;
      padding: 0 0 0 6px;
      border: 1px solid #dedad6;
      border-radius: 11px;
      background: #fbf8f4;
    }
    .search input {
      flex: 1;
      min-width: 0;
      font-size: 9px;
    }
    .search input::placeholder {
      color: #636363;
      opacity: 1;
    }
    .apps {
      display: grid;
      grid-template-columns: repeat(11, 1fr);
      width: 324px;
      margin-left: 2px;
    }
    .app {
      position: relative;
      display: grid;
      place-items: center;
      height: 28px;
    }
    .app::after {
      content: "";
      position: absolute;
      bottom: 0;
      width: 0;
      height: 2px;
      border-radius: 1px;
      background: #85807c;
    }
    .open::after {
      width: 4px;
    }
    .active::before {
      content: "";
      position: absolute;
      inset: 1px 2px;
      border-radius: 3px;
      background: #f9f3f0;
    }
    .active::after {
      width: 10px;
      background: #1a76b8;
    }
    .app svg {
      position: relative;
    }
    .count {
      position: absolute;
      top: 3px;
      right: 4px;
      width: 9px;
      height: 9px;
      border-radius: 50%;
      background: #d43a45;
      color: #fff;
      font-size: 6px;
      line-height: 9px;
      text-align: center;
    }
    .tray {
      display: flex;
      align-items: center;
      justify-self: end;
      gap: 7px;
    }
    .clock {
      margin-left: 1px;
      text-align: right;
    }
    .clock span {
      display: block;
    }
  `;

  private icons(items: Shortcut[]) {
    return html`<nav class="icons">
      ${items.map(
        (i) => html`<button class="shortcut">
          ${draw(32, "0 0 32 32", svg`${i.art}${i.link ? shortcut : nothing}`)}
          <span>${i.label}</span>
        </button>`
      )}
    </nav>`;
  }

  private btn(label: string, art: Art, size = 12) {
    return html`<button aria-label=${label}>${draw(size, `0 0 12 12`, art)}</button>`;
  }

  private line(l: Line) {
    return html`<li>
      ${l.reply ? html`<div class="reply">${draw(10, "0 0 10 10", glyph.reply)}<span>${l.reply}</span></div>` : nothing}
      <div class="msg">${l.marks}<span><b class=${l.tone}>${l.who}</b><b>:</b></span><span>${l.text}</span></div>
    </li>`;
  }

  render() {
    return html`
      <main class="desktop">
        ${this.icons(leftIcons)}
        <section class="window">
          <div class="chrome">
            <div class="titlebar">
              ${draw(11, "0 0 12 12", glyph.kick)}
              <span class="caption">kick.com/popout/giigii_g/chat - Google Chrome</span>
              <div class="controls">
                ${this.btn("Simge durumuna küçült", glyph.min)}${this.btn("Ekranı kapla", glyph.max)}${this.btn("Kapat", glyph.close)}
              </div>
            </div>
            <div class="address">
              <button class="tune" aria-label="Site bilgileri">${draw(11, "0 0 11 11", glyph.tune)}</button>
              <span><b>kick.com</b>/popout/giigii_g/chat</span>
            </div>
          </div>

          <header class="head">
            <h1>Sohbet</h1>
            <div class="actions">${this.btn("Kullanıcılar", glyph.users)}${this.btn("Menü", glyph.dots)}</div>
          </header>
          <div class="mod">
            ${this.btn("Yasakla", glyph.hammer)}${this.btn("Sil", glyph.trash)}${this.btn("Sohbet modu", glyph.bubble)}${this.btn("Zaman aşımı", glyph.hourglass)}
          </div>
          <div class="leaders">
            <span class="leader">${rankHex("1", "#f5c04a", "#d8962a")}<span class="gold">Knowmeii</span><i>1</i></span>
            <span class="leader">${rankHex("2", "#e8e8e8", "#bdbdbd")}<span>PskBotega</span><i>1</i></span>
          </div>

          <ol class="feed">
            ${lines.map((l) => this.line(l))}
            <div class="thumb"></div>
          </ol>

          <form class="composer" @submit=${(e: Event) => e.preventDefault()}>
            <div class="only">${draw(9, "0 0 9 9", glyph.heart)}<span>Takipçilere Özel</span></div>
            <div class="quick">
              ${quickEmotes.map(([name, art]) => html`<button type="button" aria-label=${name}>${draw(16, "0 0 16 16", art)}</button>`)}
            </div>
            <div class="field">
              <button type="button" aria-label="Rozet">${draw(12, "0 0 12 12", glyph.shield)}</button>
              <input type="text" aria-label="Bir mesaj gönderin" placeholder="Bir mesaj gönderin" />
              <button type="button" aria-label="İfadeler">${draw(11, "0 0 12 12", glyph.smile)}</button>
            </div>
            <div class="foot">
              <button type="button" class="pair" aria-label="Puanlar">
                ${draw(12, "0 0 12 12", glyph.orbs)}
                <svg width="14" height="12" viewBox="0 0 14 12" aria-hidden="true">${glyph.infinity}</svg>
              </button>
              <button type="button" class="balance">${draw(12, "0 0 12 12", glyph.kickCoin)}<span>0</span></button>
              <div class="send-group">
                <button type="button" aria-label="Sohbet">${draw(12, "0 0 12 12", glyph.bubble)}</button>
                <button type="button" aria-label="Ayarlar">${draw(12, "0 0 12 12", glyph.gear)}</button>
                <button type="submit" class="send">Gönder</button>
              </div>
            </div>
          </form>
        </section>
        ${this.icons(rightIcons)}
      </main>

      <footer class="taskbar">
        <button class="weather">
          ${draw(
            16,
            "0 0 16 16",
            svg`<path d="M9 1a7 7 0 1 1-5 12c4 1 8-3 5-12z" fill="#f0a92c"/><path d="M1 5a2 2 0 0 1 2-2 3 3 0 0 1 5 1 1.500 1.500 0 0 1 0 3H2a1.500 1.500 0 0 1-1-2z" fill="#b9d3ee"/><path d="M8 12a2 2 0 0 1 3-2 2 2 0 0 1 4 1 1.500 1.500 0 0 1 0 3H9a1.500 1.500 0 0 1-1-2z" fill="#d3e2f3"/>`
          )}
          <span><span>29°C</span><span class="sky">Parçalı bulutlu</span></span>
        </button>
        <div class="center">
          <button class="start" aria-label="Başlat">
            ${draw(16, "0 0 16 16", svg`<path d="M0 0h7.600v7.600H0zM8.400 0H16v7.600H8.400z" fill="#2aa5e6"/><path d="M0 8.400h7.600V16H0zM8.400 8.400H16V16H8.400z" fill="#0f7fd0"/>`)}
          </button>
          <label class="search">
            ${draw(11, "0 0 11 11", svg`<circle cx="4.600" cy="4.600" r="3.600" fill="none" stroke="#222" stroke-width="1.300"/><path d="M7.300 7.300l3 3" stroke="#222" stroke-width="1.300"/>`)}
            <input type="search" aria-label="Ara" placeholder="Ara" />
            ${cow}
          </label>
          <div class="apps">
            ${taskArt.map(
              (a) => html`<button class="app ${a.state ?? ""}" aria-label=${a.name}>
                ${draw(16, "0 0 32 32", a.art)}${a.name === "Discord" ? html`<span class="count">9+</span>` : nothing}
              </button>`
            )}
          </div>
        </div>
        <div class="tray">
          <button aria-label="Gizli simgeler">${draw(12, "0 0 12 12", svg`<path d="M3 7.500l3-3 3 3" fill="none" stroke="#333" stroke-width="1"/>`)}</button>
          <button aria-label="Mikrofon">${draw(14, "0 0 12 12", svg`<rect x="4.500" y="1.500" width="3" height="5.500" rx="1.500" fill="#5a9bd0"/><path d="M3 5.500c0 4 6 4 6 0M6 8.500V11" fill="none" stroke="#4a85b4" stroke-width=".9"/>`)}</button>
          <button aria-label="Ağ">${draw(12, "0 0 12 12", svg`<path d="M8 2H1.500v6.500H8M3 10.500h4M5 8.500v2M9.700 5.500V10H8M8.500 2.500h2.500v2.500H8.500z" fill="none" stroke="#333" stroke-width=".9"/>`)}</button>
          <button aria-label="Ses">${draw(12, "0 0 12 12", svg`<path d="M1 4.500h2l2.500-2v7L3 7.500H1zM7 4.500c.8.800.8 2.200 0 3M8.500 3.200c1.500 1.600 1.500 4 0 5.600M10 2c2.200 2.300 2.200 5.700 0 8" fill="none" stroke="#333" stroke-width=".8"/>`)}</button>
          <div class="clock"><span>21:54</span><span>6.08.2026</span></div>
        </div>
      </footer>
    `;
  }
}
